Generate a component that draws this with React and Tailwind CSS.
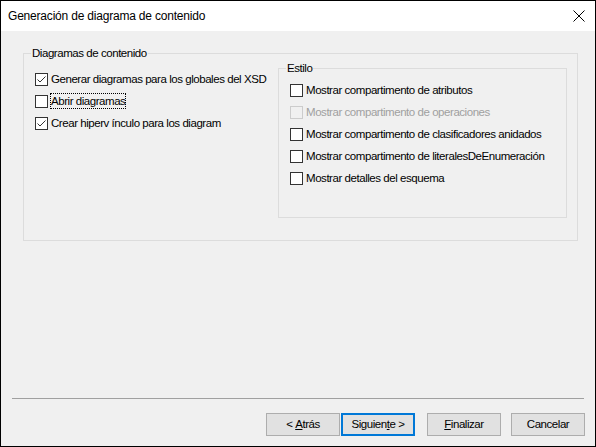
import React from "react";

const font = { fontFamily: '"Liberation Sans", Arial, sans-serif' };

function Check({ checked, disabled, focus, label }) {
  return (
    <div className="flex items-center h-[22px]">
      <span
        className={
          "w-[13px] h-[13px] border flex items-center justify-center shrink-0 " +
          (disabled ? "border-[#cccccc] bg-[#f0f0f0]" : "border-[#333333] bg-white")
        }
      >
        {checked && (
          <svg width="11" height="11" viewBox="0 0 11 11">
            <path d="M1.5 5.5 L4 8 L9.5 2.5" fill="none" stroke="#333333" strokeWidth="1" />
          </svg>
        )}
      </span>
      <span
        className={
          "ml-[3px] leading-[14px] whitespace-nowrap " +
          (disabled ? "text-[#a0a0a0] " : "text-black ") +
          (focus ? "outline outline-1 outline-dotted outline-black" : "")
        }
      >
        {label}
      </span>
    </div>
  );
}

function Btn({ children, primary }) {
  return (
    <button
      className={
        "w-[74px] h-[23px] bg-[#e1e1e1] text-[11.5px] text-black flex items-center justify-center " +
        (primary ? "border-2 border-[#0078d7]" : "border border-[#adadad]")
      }
    >
      {children}
    </button>
  );
}

export default function App() {
  return (
    <div
      className="w-[596px] h-[447px] border border-black bg-[#f0f0f0] flex flex-col text-[11.5px] tracking-[-0.45px]"
      style={font}
    >
      <div className="h-[30px] bg-white flex items-center justify-between pl-[7px] pr-[10px] shrink-0">
        <span className="text-[12px] tracking-[-0.2px] text-black">Generación de diagrama de contenido</span>
        <svg width="12" height="12" viewBox="0 0 12 12">
          <path d="M0.5 0.5 L11.5 11.5 M11.5 0.5 L0.5 11.5" stroke="#000" strokeWidth="1" />
        </svg>
      </div>

      <fieldset className="ml-[22px] mt-[15px] w-[555px] h-[195px] border border-[#dcdcdc] flex">
        <legend className="ml-[7px] px-[1px] leading-[14px]">Diagramas de contenido</legend>
        <div className="w-[240px] shrink-0 flex flex-col pl-[11px] pt-[8px]">
          <Check checked label="Generar diagramas para los globales del XSD" />
          <Check focus label="Abrir diagramas" />
          <Check checked label="Crear hiperv ínculo para los diagram" />
        </div>
        <fieldset className="ml-auto mr-[10px] mt-[1px] w-[289px] h-[157px] shrink-0 border border-[#dcdcdc]">
          <legend className="ml-[7px] px-[1px] leading-[14px]">Estilo</legend>
          <div className="flex flex-col pl-[11px] pt-[4px]">
            <Check label="Mostrar compartimento de atributos" />
            <Check disabled label="Mostrar compartimento de operaciones" />
            <Check label="Mostrar compartimento de clasificadores anidados" />
            <Check label="Mostrar compartimento de literalesDeEnumeración" />
            <Check label="Mostrar detalles del esquema" />
          </div>
        </fieldset>
      </fieldset>

      <div className="mt-auto mx-[11px] border-t border-[#a0a0a0]" />
      <div className="flex justify-end items-center pr-[10px] pt-[14px] pb-[10px]">
        <Btn>
          &lt;&nbsp;<span className="underline">A</span>trás
        </Btn>
        <div className="ml-[1px]">
          <Btn primary>
            Siguien<span className="underline">t</span>e &gt;
          </Btn>
        </div>
        <div className="ml-[12px]">
          <Btn>
            <span className="underline">F</span>inalizar
          </Btn>
        </div>
        <div className="ml-[10px]">
          <Btn>Cancelar</Btn>
        </div>
      </div>
    </div>
  );
}
